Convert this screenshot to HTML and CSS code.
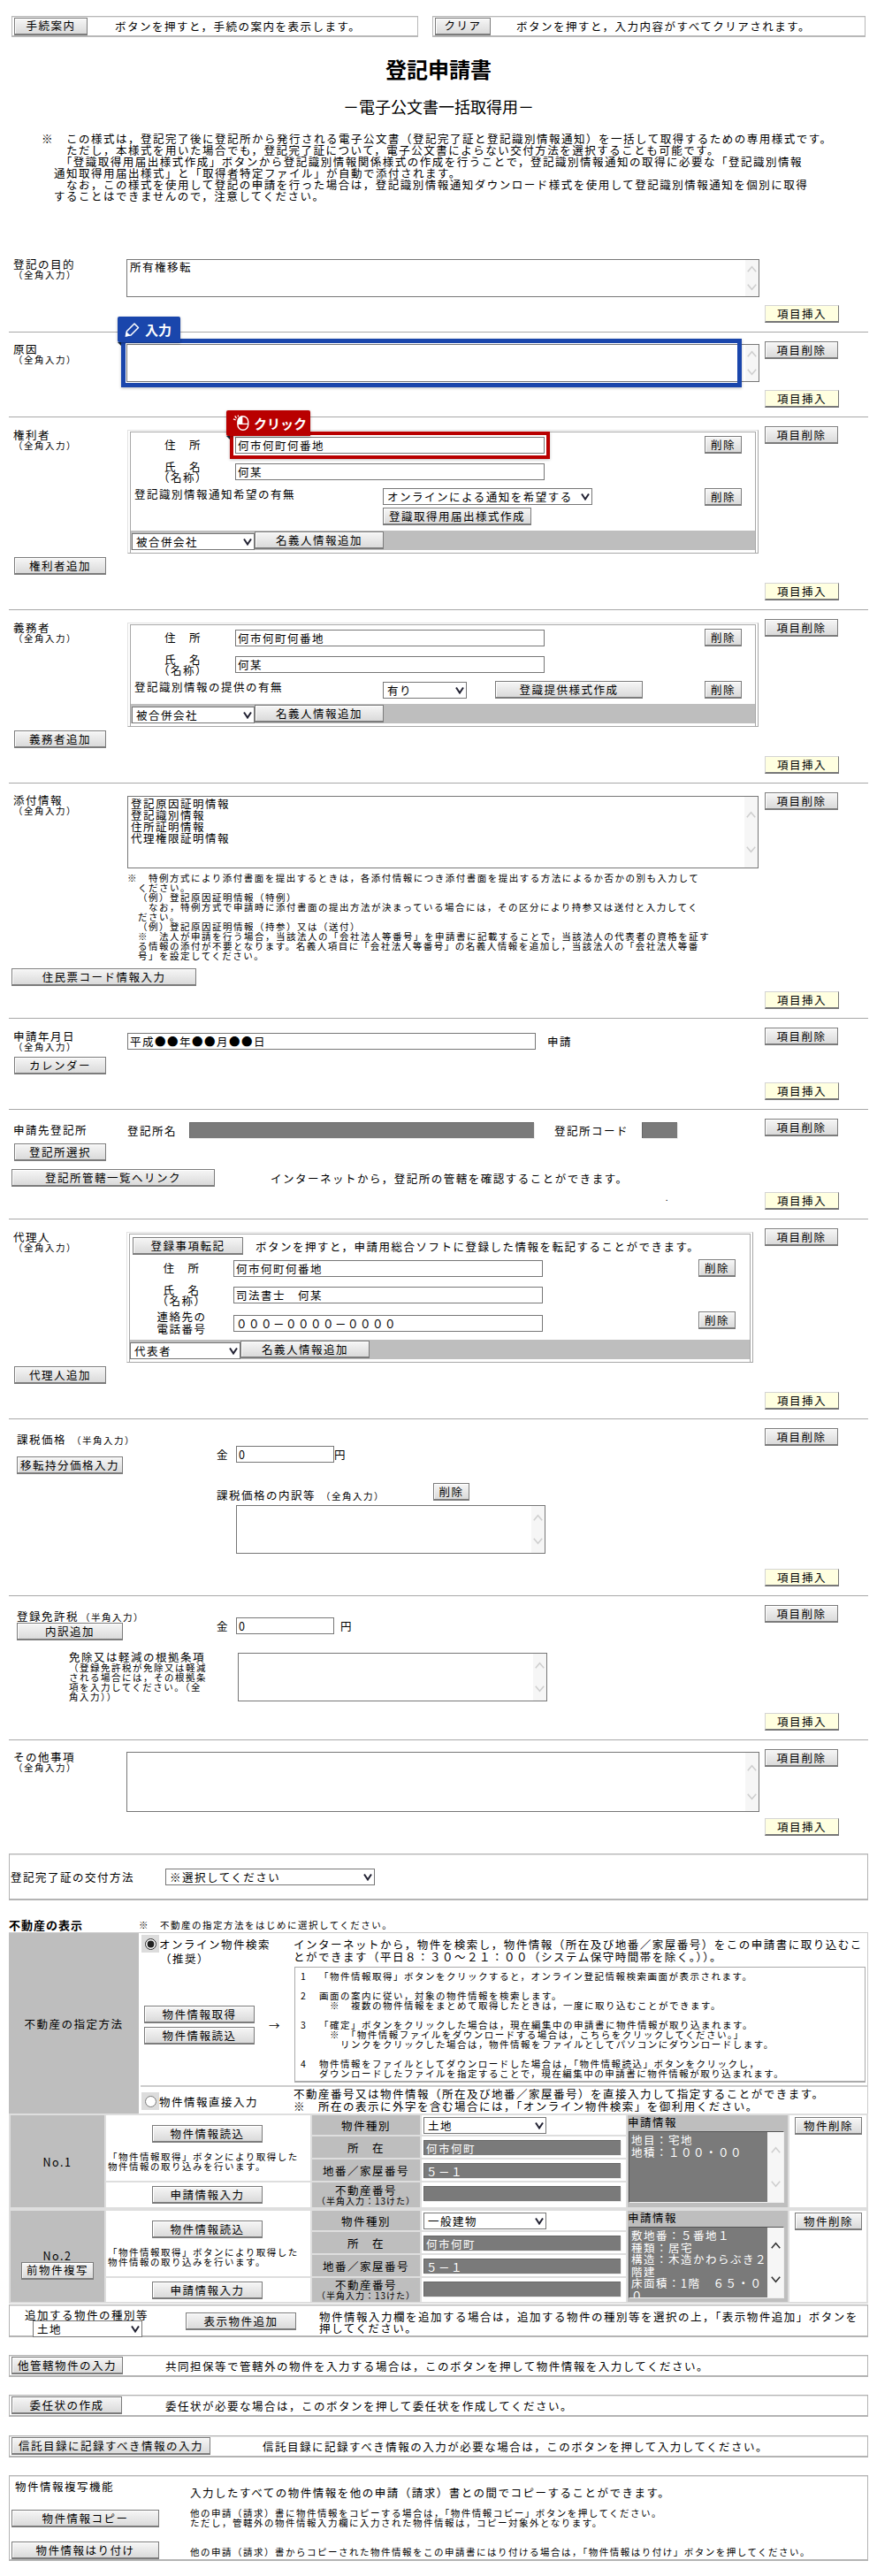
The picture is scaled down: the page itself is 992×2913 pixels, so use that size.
FILE: index.html
```html
<!DOCTYPE html>
<html lang="ja">
<head>
<meta charset="utf-8">
<title>登記申請書</title>
<link rel="stylesheet" href="styles.css">
</head>
<body>
<form class="page">
  <div class="top">
    <div class="box box--guide"><button type="button" class="btn btn--guide">手続案内</button><p class="guide-a">ボタンを押すと，手続の案内を表示します。</p></div>
    <div class="box box--clear"><button type="button" class="btn btn--clear">クリア</button><p class="guide-b">ボタンを押すと，入力内容がすべてクリアされます。</p></div>
  </div>
  <h1 class="title">登記申請書</h1>
  <h2 class="subtitle">－電子公文書一括取得用－</h2>
  <p class="lead">※　この様式は，登記完了後に登記所から発行される電子公文書（登記完了証と登記識別情報通知）を一括して取得するための専用様式です。<br>　ただし，本様式を用いた場合でも，登記完了証について，電子公文書によらない交付方法を選択することも可能です。<br>　「登識取得用届出様式作成」ボタンから登記識別情報関係様式の作成を行うことで，登記識別情報通知の取得に必要な「登記識別情報<br>通知取得用届出様式」と「取得者特定ファイル」が自動で添付されます。<br>　なお，この様式を使用して登記の申請を行った場合は，登記識別情報通知ダウンロード様式を使用して登記識別情報通知を個別に取得<br>することはできませんので，注意してください。</p>

  <section class="sec sec--first">
    <div class="sec-label">登記の目的<small>（全角入力）</small></div>
    <div class="sec-body">
      <div class="ta ta--43"><textarea>所有権移転</textarea><div class="sb"><svg class="chev" viewBox="0 0 14 10"><path d="M1 9 7 2l6 7"/></svg><svg class="chev chev--down" viewBox="0 0 14 10"><path d="M1 1l6 7 6-7"/></svg></div></div>
    </div>
    <div class="sec-foot"><button type="button" class="btn btn--insert">項目挿入</button></div>
  </section>

  <section class="sec">
    <div class="sec-label">原因<small>（全角入力）</small></div>
    <div class="sec-body sec-body--anchor">
      <div class="ta ta--43"><textarea></textarea><div class="sb"><svg class="chev" viewBox="0 0 14 10"><path d="M1 9 7 2l6 7"/></svg><svg class="chev chev--down" viewBox="0 0 14 10"><path d="M1 1l6 7 6-7"/></svg></div></div>
      <div class="frame frame--blue"></div>
      <div class="tag tag--blue"><svg class="tag-icon" viewBox="0 0 18 18"><path d="M2.5 15.5l1-5L12 2l4.5 4.5L8 15z" fill="none" stroke="#fff" stroke-width="1.5" stroke-linejoin="round"/><path d="M1.5 17l1.5-6 4.5 4.5z" fill="#fff"/></svg><span>入力</span></div>
    </div>
    <div class="sec-tools"><button type="button" class="btn btn--item">項目削除</button></div>
    <div class="sec-foot"><button type="button" class="btn btn--insert">項目挿入</button></div>
  </section>

  <section class="sec">
    <div class="sec-label sec-label--3">権利者<small>（全角入力）</small></div>
    <div class="sec-body sec-body--fs">
      <div class="fs"><div class="fs-in">
        <div class="prow prow--1">
          <span class="plabel">住　所</span>
          <div class="field-anchor">
            <input class="fld" type="text" value="何市何町何番地">
            <div class="frame frame--red"></div>
            <div class="tag tag--red"><svg class="tag-icon tag-icon--mouse" viewBox="0 0 22 20"><path d="M7.5 9a6.5 6.5 0 0 1 13 0v4a6.5 6.5 0 0 1-13 0z" transform="translate(-1 -1)" fill="none" stroke="#fff" stroke-width="1.6"/><path d="M6.5 12V8a6 6 0 0 1 6-6v10z" transform="translate(0 -1)" fill="#fff"/><path d="M6.5 11h13" stroke="#fff" stroke-width="1.4"/><path d="M1 5l3 1M3 1l2 3M7 0v2" stroke="#fff" stroke-width="1.4"/></svg><span>クリック</span></div>
          </div>
          <button type="button" class="btn btn--del">削除</button>
        </div>
        <div class="prow prow--2">
          <span class="plabel plabel--two">氏　名<br>（名称）</span>
          <input class="fld fld--down" type="text" value="何某">
        </div>
        <div class="prow prow--3">
          <span class="plabel-wide">登記識別情報通知希望の有無</span>
          <div class="stack">
            <select class="sel sel--notify"><option>オンラインによる通知を希望する</option></select>
            <button type="button" class="btn btn--form">登識取得用届出様式作成</button>
          </div>
          <button type="button" class="btn btn--del">削除</button>
        </div>
        <div class="bar">
          <select class="sel sel--bar"><option>被合併会社</option></select>
          <button type="button" class="btn btn--bar">名義人情報追加</button>
        </div>
      </div></div>
    </div>
    <div class="sec-tools"><button type="button" class="btn btn--item">項目削除</button></div>
    <div class="sec-wide sec-wide--add"><button type="button" class="btn btn--add">権利者追加</button></div>
    <div class="sec-foot"><button type="button" class="btn btn--insert">項目挿入</button></div>
  </section>

  <section class="sec">
    <div class="sec-label sec-label--3">義務者<small>（全角入力）</small></div>
    <div class="sec-body sec-body--fs">
      <div class="fs"><div class="fs-in">
        <div class="prow prow--1">
          <span class="plabel">住　所</span>
          <input class="fld fld--down" type="text" value="何市何町何番地">
          <button type="button" class="btn btn--del">削除</button>
        </div>
        <div class="prow prow--2">
          <span class="plabel plabel--two">氏　名<br>（名称）</span>
          <input class="fld fld--down" type="text" value="何某">
        </div>
        <div class="prow prow--3">
          <span class="plabel-wide">登記識別情報の提供の有無</span>
          <select class="sel sel--provide"><option>有り</option></select>
          <button type="button" class="btn btn--provide">登識提供様式作成</button>
          <button type="button" class="btn btn--del">削除</button>
        </div>
        <div class="bar">
          <select class="sel sel--bar"><option>被合併会社</option></select>
          <button type="button" class="btn btn--bar">名義人情報追加</button>
        </div>
      </div></div>
    </div>
    <div class="sec-tools"><button type="button" class="btn btn--item">項目削除</button></div>
    <div class="sec-wide sec-wide--add"><button type="button" class="btn btn--add">義務者追加</button></div>
    <div class="sec-foot"><button type="button" class="btn btn--insert">項目挿入</button></div>
  </section>

  <section class="sec sec--attach">
    <div class="sec-label">添付情報<small>（全角入力）</small></div>
    <div class="sec-body sec-body--attach">
      <div class="ta ta--82"><textarea>登記原因証明情報
登記識別情報
住所証明情報
代理権限証明情報</textarea><div class="sb"><svg class="chev" viewBox="0 0 14 10"><path d="M1 9 7 2l6 7"/></svg><svg class="chev chev--down" viewBox="0 0 14 10"><path d="M1 1l6 7 6-7"/></svg></div></div>
      <p class="note">※　特例方式により添付書面を提出するときは，各添付情報につき添付書面を提出する方法によるか否かの別も入力して<br>ください。<br>（例）登記原因証明情報（特例）<br>　なお，特例方式で申請時に添付書面の提出方法が決まっている場合には，その区分により持参又は送付と入力してく<br>ださい。<br>（例）登記原因証明情報（持参）又は（送付）<br>※　法人が申請を行う場合，当該法人の「会社法人等番号」を申請書に記載することで，当該法人の代表者の資格を証す<br>る情報の添付が不要となります。名義人項目に「会社法人等番号」の名義人情報を追加し，当該法人の「会社法人等番<br>号」を設定してください。</p>
    </div>
    <div class="sec-tools"><button type="button" class="btn btn--item">項目削除</button></div>
    <div class="sec-wide sec-wide--resident"><button type="button" class="btn btn--resident">住民票コード情報入力</button></div>
    <div class="sec-foot"><button type="button" class="btn btn--insert">項目挿入</button></div>
  </section>

  <section class="sec sec--date">
    <div class="sec-label sec-label--3">申請年月日<small>（全角入力）</small></div>
    <div class="sec-body sec-body--date">
      <input class="fld fld--date" type="text" value="平成●●年●●月●●日"><span class="date-suffix">申請</span>
    </div>
    <div class="sec-tools"><button type="button" class="btn btn--item">項目削除</button></div>
    <div class="sec-wide sec-wide--calendar"><button type="button" class="btn btn--add">カレンダー</button></div>
    <div class="sec-foot"><button type="button" class="btn btn--insert">項目挿入</button></div>
  </section>

  <section class="sec sec--office">
    <div class="sec-label sec-label--6">申請先登記所</div>
    <div class="sec-body sec-body--office">
      <span class="office-label">登記所名</span><input class="dark dark--name" type="text" disabled>
      <span class="office-label office-label--code">登記所コード</span><input class="dark dark--code" type="text" disabled>
    </div>
    <div class="sec-tools"><button type="button" class="btn btn--item">項目削除</button></div>
    <div class="sec-wide sec-wide--pick"><button type="button" class="btn btn--add">登記所選択</button></div>
    <div class="sec-wide sec-wide--link"><button type="button" class="btn btn--link">登記所管轄一覧へリンク</button><span class="link-text">インターネットから，登記所の管轄を確認することができます。</span></div>
    <div class="sec-foot"><span class="stray">.</span><button type="button" class="btn btn--insert">項目挿入</button></div>
  </section>

  <section class="sec">
    <div class="sec-label sec-label--3">代理人<small>（全角入力）</small></div>
    <div class="sec-body sec-body--agent">
      <div class="fs fs--agent"><div class="fs-in">
        <div class="convert"><button type="button" class="btn btn--convert">登録事項転記</button><span class="convert-text">ボタンを押すと，申請用総合ソフトに登録した情報を転記することができます。</span></div>
        <div class="prow prow--a1">
          <span class="plabel plabel--agent">住　所</span>
          <input class="fld fld--down" type="text" value="何市何町何番地">
          <button type="button" class="btn btn--del">削除</button>
        </div>
        <div class="prow prow--2">
          <span class="plabel plabel--agent plabel--two">氏　名<br>（名称）</span>
          <input class="fld fld--down" type="text" value="司法書士　何某">
        </div>
        <div class="prow prow--a3">
          <span class="plabel plabel--agent plabel--tel">連絡先の<br>電話番号</span>
          <input class="fld fld--tel" type="text" value="０００－００００－００００">
          <button type="button" class="btn btn--del">削除</button>
        </div>
        <div class="bar bar--agent">
          <select class="sel sel--agent"><option>代表者</option></select>
          <button type="button" class="btn btn--bar">名義人情報追加</button>
        </div>
      </div></div>
    </div>
    <div class="sec-tools"><button type="button" class="btn btn--item">項目削除</button></div>
    <div class="sec-wide sec-wide--add"><button type="button" class="btn btn--add">代理人追加</button></div>
    <div class="sec-foot"><button type="button" class="btn btn--insert">項目挿入</button></div>
  </section>

  <section class="sec sec--tax">
    <div class="tax-left">
      <div class="tax-title">課税価格<small class="inline-small">（半角入力）</small></div>
      <button type="button" class="btn btn--tax btn--tax-1">移転持分価格入力</button>
    </div>
    <div class="tax-mid">
      <div class="yen yen--1"><span>金</span><input class="fld fld--yen" type="text" value="0"><span>円</span></div>
      <div class="breakdown"><span>課税価格の内訳等</span><small class="inline-small">（全角入力）</small><button type="button" class="btn btn--del">削除</button></div>
      <div class="ta ta--55"><textarea></textarea><div class="sb"><svg class="chev" viewBox="0 0 14 10"><path d="M1 9 7 2l6 7"/></svg><svg class="chev chev--down" viewBox="0 0 14 10"><path d="M1 1l6 7 6-7"/></svg></div></div>
    </div>
    <div class="sec-tools"><button type="button" class="btn btn--item">項目削除</button></div>
    <div class="sec-foot sec-foot--17"><button type="button" class="btn btn--insert">項目挿入</button></div>
  </section>

  <section class="sec sec--tax">
    <div class="tax-left">
      <div class="tax-title">登録免許税<small class="inline-small inline-small--tight">（半角入力）</small></div>
      <button type="button" class="btn btn--tax btn--tax-2">内訳追加</button>
    </div>
    <div class="tax-mid">
      <div class="yen yen--2"><span>金</span><input class="fld fld--yen" type="text" value="0"><span class="yen-mark">円</span></div>
    </div>
    <div class="sec-tools"><button type="button" class="btn btn--item">項目削除</button></div>
    <div class="sec-wide exempt">
      <div class="exempt-text">免除又は軽減の根拠条項<small>（登録免許税が免除又は軽減<br>される場合には，その根拠条<br>項を入力してください。（全<br>角入力））</small></div>
      <div class="ta ta--55"><textarea></textarea><div class="sb"><svg class="chev" viewBox="0 0 14 10"><path d="M1 9 7 2l6 7"/></svg><svg class="chev chev--down" viewBox="0 0 14 10"><path d="M1 1l6 7 6-7"/></svg></div></div>
    </div>
    <div class="sec-foot sec-foot--13"><button type="button" class="btn btn--insert">項目挿入</button></div>
  </section>

  <section class="sec sec--last">
    <div class="sec-label">その他事項<small>（全角入力）</small></div>
    <div class="sec-body">
      <div class="ta ta--68"><textarea></textarea><div class="sb"><svg class="chev" viewBox="0 0 14 10"><path d="M1 9 7 2l6 7"/></svg><svg class="chev chev--down" viewBox="0 0 14 10"><path d="M1 1l6 7 6-7"/></svg></div></div>
    </div>
    <div class="sec-tools"><button type="button" class="btn btn--item">項目削除</button></div>
    <div class="sec-foot sec-foot--7"><button type="button" class="btn btn--insert">項目挿入</button></div>
  </section>

  <div class="panel panel--delivery">
    <span class="delivery-label">登記完了証の交付方法</span>
    <select class="sel sel--delivery"><option>※選択してください</option></select>
  </div>

  <div class="estate-head"><strong>不動産の表示</strong><span>※　不動産の指定方法をはじめに選択してください。</span></div>

  <div class="spec">
    <div class="spec-name">不動産の指定方法</div>
    <div class="spec-main">
      <div class="spec-upper">
        <div class="spec-left">
          <label class="opt"><span class="radio-bg"><input type="radio" name="method" checked></span>オンライン物件検索</label>
          <div class="opt-sub">（推奨）</div>
          <div class="fetch">
            <div class="fetch-btns">
              <button type="button" class="btn btn--std">物件情報取得</button>
              <button type="button" class="btn btn--std">物件情報読込</button>
            </div>
            <span class="arrow">→</span>
          </div>
        </div>
        <div class="spec-right">
          <p class="spec-text">インターネットから，物件を検索し，物件情報（所在及び地番／家屋番号）をこの申請書に取り込むことができます（平日８：３０～２１：００（システム保守時間帯を除く。））。</p>
          <div class="steps">
            <div class="step"><span class="step-n">1</span><div>「物件情報取得」ボタンをクリックすると，オンライン登記情報検索画面が表示されます。</div></div>
            <div class="step"><span class="step-n">2</span><div>画面の案内に従い，対象の物件情報を検索します。<br>　※　複数の物件情報をまとめて取得したときは，一度に取り込むことができます。</div></div>
            <div class="step"><span class="step-n">3</span><div>「確定」ボタンをクリックした場合は，現在編集中の申請書に物件情報が取り込まれます。<br>　※　「物件情報ファイルをダウンロードする場合は，こちらをクリックしてください。」<br>　　リンクをクリックした場合は，物件情報をファイルとしてパソコンにダウンロードします。</div></div>
            <div class="step"><span class="step-n">4</span><div>物件情報をファイルとしてダウンロードした場合は，「物件情報読込」ボタンをクリックし，<br>ダウンロードしたファイルを指定することで，現在編集中の申請書に物件情報が取り込まれます。</div></div>
          </div>
        </div>
      </div>
      <div class="spec-lower">
        <label class="opt opt--lower"><span class="radio-bg"><input type="radio" name="method"></span>物件情報直接入力</label>
        <p class="spec-text spec-text--lower">不動産番号又は物件情報（所在及び地番／家屋番号）を直接入力して指定することができます。<br>※　所在の表示に外字を含む場合には，「オンライン物件検索」を御利用ください。</p>
      </div>
    </div>
  </div>

  <table class="prop prop--1">
    <colgroup><col class="c1"><col class="c2"><col class="c3"><col class="c4"><col class="c5"><col class="c6"></colgroup>
    <tr class="r1">
      <td rowspan="4" class="grey prop-no">No.1</td>
      <td rowspan="3" class="prop-read"><button type="button" class="btn btn--std btn--read">物件情報読込</button><p class="prop-note">「物件情報取得」ボタンにより取得した<br>物件情報の取り込みを行います。</p></td>
      <td class="grey">物件種別</td>
      <td class="prop-val"><select class="sel sel--kind"><option>土地</option></select></td>
      <td rowspan="4" class="grey prop-info">
        <div class="info-head">申請情報</div>
        <div class="ta ta--dark"><textarea>地目：宅地
地積：１００・００</textarea><div class="sb"><svg class="chev" viewBox="0 0 14 10"><path d="M1 9 7 2l6 7"/></svg><svg class="chev chev--down" viewBox="0 0 14 10"><path d="M1 1l6 7 6-7"/></svg></div></div>
      </td>
      <td rowspan="4" class="prop-del"><button type="button" class="btn btn--estate-del">物件削除</button></td>
    </tr>
    <tr class="r2">
      <td class="grey">所　在</td>
      <td class="prop-val"><input class="dark dark--prop" type="text" value="何市何町"></td>
    </tr>
    <tr class="r3">
      <td class="grey">地番／家屋番号</td>
      <td class="prop-val"><input class="dark dark--prop" type="text" value="５－１"></td>
    </tr>
    <tr class="r4">
      <td class="prop-apply"><button type="button" class="btn btn--std btn--read">申請情報入力</button></td>
      <td class="grey grey--num">不動産番号<small>（半角入力：13けた）</small></td>
      <td class="prop-val"><input class="dark dark--prop" type="text"></td>
    </tr>
  </table>

  <table class="prop prop--2">
    <colgroup><col class="c1"><col class="c2"><col class="c3"><col class="c4"><col class="c5"><col class="c6"></colgroup>
    <tr class="r1">
      <td rowspan="4" class="grey prop-no prop-no--2"><span>No.2</span><button type="button" class="btn btn--copyprev">前物件複写</button></td>
      <td rowspan="3" class="prop-read"><button type="button" class="btn btn--std btn--read">物件情報読込</button><p class="prop-note">「物件情報取得」ボタンにより取得した<br>物件情報の取り込みを行います。</p></td>
      <td class="grey">物件種別</td>
      <td class="prop-val"><select class="sel sel--kind"><option>一般建物</option></select></td>
      <td rowspan="4" class="grey prop-info">
        <div class="info-head">申請情報</div>
        <div class="ta ta--dark ta--active"><textarea>敷地番：５番地１
種類：居宅
構造：木造かわらぶき２階建
床面積：1階　６５・００
２階　５０・００</textarea><div class="sb"><svg class="chev" viewBox="0 0 14 10"><path d="M1 9 7 2l6 7"/></svg><svg class="chev chev--down" viewBox="0 0 14 10"><path d="M1 1l6 7 6-7"/></svg></div></div>
      </td>
      <td rowspan="4" class="prop-del"><button type="button" class="btn btn--estate-del">物件削除</button></td>
    </tr>
    <tr class="r2">
      <td class="grey">所　在</td>
      <td class="prop-val"><input class="dark dark--prop" type="text" value="何市何町"></td>
    </tr>
    <tr class="r3">
      <td class="grey">地番／家屋番号</td>
      <td class="prop-val"><input class="dark dark--prop" type="text" value="５－１"></td>
    </tr>
    <tr class="r4 r4--short">
      <td class="prop-apply"><button type="button" class="btn btn--std btn--read">申請情報入力</button></td>
      <td class="grey grey--num">不動産番号<small>（半角入力：13けた）</small></td>
      <td class="prop-val"><input class="dark dark--prop" type="text"></td>
    </tr>
  </table>

  <div class="panel panel--addprop">
    <div class="addprop-left"><span>追加する物件の種別等</span><select class="sel sel--addkind"><option>土地</option></select></div>
    <button type="button" class="btn btn--std btn--addprop">表示物件追加</button>
    <p class="addprop-text">物件情報入力欄を追加する場合は，追加する物件の種別等を選択の上，「表示物件追加」ボタンを押してください。</p>
  </div>

  <div class="panel panel--row panel--r1"><button type="button" class="btn btn--w126">他管轄物件の入力</button><span class="row-text row-text--187">共同担保等で管轄外の物件を入力する場合は，このボタンを押して物件情報を入力してください。</span></div>
  <div class="panel panel--row panel--r2"><button type="button" class="btn btn--w125">委任状の作成</button><span class="row-text row-text--187b">委任状が必要な場合は，このボタンを押して委任状を作成してください。</span></div>
  <div class="panel panel--row panel--r3"><button type="button" class="btn btn--w225">信託目録に記録すべき情報の入力</button><span class="row-text row-text--297">信託目録に記録すべき情報の入力が必要な場合は，このボタンを押して入力してください。</span></div>

  <div class="panel panel--copy">
    <div class="copy-title">物件情報複写機能</div>
    <p class="copy-lead">入力したすべての物件情報を他の申請（請求）書との間でコピーすることができます。</p>
    <button type="button" class="btn btn--copy">物件情報コピー</button>
    <p class="copy-note">他の申請（請求）書に物件情報をコピーする場合は，「物件情報コピー」ボタンを押してください。<br>ただし，管轄外の物件情報入力欄に入力された物件情報は，コピー対象外となります。</p>
    <button type="button" class="btn btn--copy">物件情報はり付け</button>
    <p class="copy-note copy-note--paste">他の申請（請求）書からコピーされた物件情報をこの申請書にはり付ける場合は，「物件情報はり付け」ボタンを押してください。</p>
  </div>
</form>
</body>
</html>
```

FILE: styles.css
```css
* { box-sizing: border-box; }
html, body { margin: 0; padding: 0; background: #fff; }
body { font: 12.5px/13px "Noto Sans CJK JP", "Liberation Sans", sans-serif; letter-spacing: 1.5px; color: #000; }
p, h1, h2 { margin: 0; }
small { font-size: 10.5px; line-height: 11px; }
button, input, select, textarea { font: inherit; letter-spacing: inherit; color: #000; margin: 0; }

.page { width: 992px; padding: 18px 10px 16px; }

/* buttons */
.btn {
  display: block; flex: none; height: 20px; padding: 0; line-height: 16px; text-align: center;
  white-space: nowrap; cursor: default; overflow: hidden;
  border: 1px solid #7c7c7c; border-bottom-width: 2px;
  background: linear-gradient(#f6f6f6, #dadada);
  box-shadow: inset 1px 1px 0 #fff;
}
.btn--guide { width: 83px; }
.btn--clear { width: 63px; }
.btn--item { width: 83px; }
.btn--insert { width: 84px; background: #ffffe0; border-color: #d4d4d4 #777 #777 #d4d4d4; box-shadow: none; }
.btn--del { width: 42px; margin-left: auto; margin-right: 15px; }
.breakdown .btn--del { margin: 0 0 0 55px; width: 41px; }
.btn--add { width: 104px; }
.btn--form { width: 168px; margin-top: 3px; }
.btn--provide { width: 167px; margin-left: 32px; }
.btn--bar { width: 146px; }
.btn--resident { width: 209px; }
.btn--link { width: 230px; }
.btn--convert { width: 125px; }
.btn--tax { width: 120px; }
.btn--tax-1 { margin-top: 13px; }
.btn--tax-2 { margin-top: 1px; }
.btn--std { width: 125px; }
.btn--estate-del { width: 76px; margin: 2px 0 0 6px; }
.btn--copyprev { width: 82px; margin: 0 auto; }
.btn--w126 { width: 126px; }
.btn--w125 { width: 125px; }
.btn--w225 { width: 225px; }
.btn--copy { width: 167px; margin-left: 2px; }

/* header */
.top { display: flex; gap: 16px; margin-left: 3px; }
.box { display: flex; align-items: center; height: 24px; padding: 0 2px; border: 1px solid #b8b8b8; border-bottom-width: 2px; box-shadow: inset 0 1px 0 #e8e8e8; }
.box--guide { width: 460px; }
.box--clear { width: 490px; }
.guide-a { margin-left: 31px; }
.guide-b { margin-left: 29px; }
.title { margin-top: 24px; font-size: 24px; line-height: 24px; letter-spacing: 0; font-weight: 700; text-align: center; }
.subtitle { margin-top: 21px; font-size: 18px; line-height: 18px; letter-spacing: 0; font-weight: 400; text-align: center; }
.lead { margin: 21px 0 52px 51px; padding-left: 0; text-indent: -14px; white-space: nowrap; }

/* sections */
.sec { display: grid; grid-template-columns: 133px 716px 1fr; padding: 10px 0; border-bottom: 1px solid #a8a8a8; align-items: start; }
.sec-label { margin: 2px 0 0 5px; white-space: nowrap; }
.sec-label--3 { margin-top: 3px; }
.sec-label--6 { margin-top: 6px; }
.sec-label small { display: block; }
.sec-body { margin-top: 3px; }
.sec-body--anchor { position: relative; }
.sec-body--fs { margin: 4px 0 0 1px; }
.sec-body--agent { margin-top: 4px; }
.sec-body--attach { margin: 4px 0 0 1px; }
.sec-body--date { margin: 6px 0 0 1px; display: flex; align-items: center; }
.sec-body--office { margin: 4px 0 0 1px; display: flex; align-items: center; }
.sec-tools { padding-left: 6px; }
.sec-wide, .sec-foot { grid-column: 1 / -1; }
.sec-wide--add { margin: 4px 0 0 6px; }
.sec-wide--resident { margin: 9px 0 0 3px; }
.sec-wide--calendar { margin: 6px 0 0 6px; }
.sec-wide--pick { margin: 6px 0 0 6px; }
.sec-wide--link { margin: 9px 0 0 3px; display: flex; align-items: center; }
.sec-foot { display: flex; justify-content: flex-end; margin: 9px 33px 0 0; }
.sec--attach .sec-foot { margin-top: 6px; }
.sec--office .sec-foot { margin-top: 6px; }
.sec-foot--17 { margin-top: 17px; }
.sec-foot--13 { margin-top: 13px; }
.sec-foot--7 { margin-top: 7px; }
.link-text { margin-left: 63px; }
.stray { margin: 1px 108px 0 0; line-height: 10px; font-size: 10px; }
.date-suffix { margin-left: 13px; }
.office-label { flex: none; width: 70px; }
.office-label--code { width: 99px; margin-left: 23px; }

/* textareas with drawn scroll column */
.ta { display: flex; border: 1px solid #777; background: #fff; overflow: hidden; }
.ta textarea { flex: 1; min-width: 0; border: 0; padding: 1px 2px 0 3px; resize: none; overflow: hidden; line-height: 13px; background: transparent; outline: 0; }
.sb { flex: none; width: 15px; display: flex; flex-direction: column; justify-content: space-around; align-items: center; background: #f6f6f6; }
.chev { width: 11px; height: 8px; fill: none; stroke: #cfcfcf; stroke-width: 2; }
.ta--43 { height: 43px; }
.ta--82 { height: 82px; width: 714px; }
.ta--55 { height: 55px; width: 350px; }
.ta--68 { height: 68px; }
.ta--dark { height: 81px; width: 176px; margin-top: 2px; background: #7a7a7a; border-color: #555; border-right-color: #eee; border-bottom-color: #eee; }
.ta--dark textarea { color: #fff; padding: 2px 0 0 2px; line-height: 13.5px; }
.ta--dark .sb { width: 18px; }
.ta--active .chev { stroke: #333; }

/* overlays */
.frame { position: absolute; pointer-events: none; box-shadow: 0 1px 3px rgba(0,0,0,.25); }
.frame--blue { left: -6px; top: -6px; width: 702px; height: 55px; border: 5px solid #1a46ac; }
.frame--red { left: -6px; top: -6px; width: 362px; height: 31px; border: 4px solid #b90000; }
.tag { position: absolute; display: flex; align-items: center; color: #fff; font-size: 15px; line-height: 16px; letter-spacing: 0; font-weight: 700; border-radius: 2px 2px 0 2px; box-shadow: 0 1px 3px rgba(0,0,0,.3); }
.tag::after { content: ""; position: absolute; left: 0; top: 100%; border-top: 4px solid #123; border-left: 4px solid transparent; }
.tag--blue { left: -10px; top: -31px; width: 71px; height: 29px; padding-left: 7px; gap: 6px; background: #1a46ac; }
.tag--red { left: -10px; top: -30px; width: 95px; height: 29px; padding-left: 7px; gap: 4px; background: #b90000; }
.tag-icon { width: 18px; height: 18px; flex: none; }
.tag-icon--mouse { width: 20px; height: 19px; }
.field-anchor { position: relative; flex: none; }

/* party field sets */
.fs { width: 714px; padding: 1px 2px 0; border: 1px solid #e2e2e2; border-bottom-color: #a8a8a8; border-right-color: #a8a8a8; }
.fs--agent { width: 709px; }
.fs-in { border: 1px solid #a8a8a8; border-bottom: 0; padding: 0 0 3px; }
.prow { display: flex; align-items: flex-start; }
.prow--1 { margin-top: 4px; height: 20px; }
.prow--1 .field-anchor { margin-top: 1px; }
.prow--2 { margin-top: 10px; height: 21px; }
.prow--3 { margin-top: 8px; }
.prow--a1 { margin-top: 5px; height: 20px; }
.prow--a3 { margin-top: 8px; height: 24px; }
.plabel { flex: none; width: 118px; text-align: center; line-height: 20px; }
.plabel--two { line-height: 12px; margin-top: -1px; }
.plabel--agent { width: 117px; }
.plabel--agent ~ .btn--del { margin-right: 16px; }
.plabel--tel { line-height: 14px; margin-top: -1px; }
.plabel-wide { flex: none; width: 285px; padding: 0 0 0 4px; line-height: 13px; }
.stack { flex: none; }
.fld { display: block; flex: none; width: 350px; height: 19px; padding: 0 2px; border: 1px solid #777; background: #fff; outline: 0; }
.fld--down { margin-top: 1px; }
.fld--tel { margin-top: 4px; }
.fld--date { width: 462px; }
.fld--yen { width: 111px; height: 19px; }
.sel {
  display: block; height: 19px; padding: 0 14px 0 4px; border: 1px solid #777; border-radius: 0; appearance: none; flex: none;
  background: #fff url("data:image/svg+xml,%3Csvg xmlns='http://www.w3.org/2000/svg' width='10' height='9'%3E%3Cpath d='M1 1.5 5 7.5 9 1.5' fill='none' stroke='%23223' stroke-width='2'/%3E%3C/svg%3E") no-repeat right 2px center;
}
.sel--notify { width: 237px; }
.sel--provide { width: 95px; margin-top: 1px; }
.sel--bar { width: 139px; margin: 2px 0 0 1px; }
.sel--agent { width: 125px; margin: 2px 0 0 0; }
.sel--delivery { width: 237px; margin-left: 35px; }
.sel--kind { width: 139px; margin: 2px 0 0 2px; }
.sel--addkind { width: 124px; margin: 0 0 0 9px; }
.bar { display: flex; align-items: flex-start; height: 22px; margin-top: 6px; padding-top: 1px; background: #bebebe; width: 706px; }
.bar--agent { margin-top: 8px; width: 701px; }
.convert { display: flex; align-items: center; margin: 3px 0 0 3px; }
.convert-text { margin-left: 14px; white-space: nowrap; }

.note { margin-top: 5px; padding-left: 12px; text-indent: -12px; font-size: 10.5px; line-height: 11px; white-space: nowrap; }

/* tax sections */
.sec--tax { grid-template-columns: 235px 614px 1fr; }
.tax-left { padding-left: 9px; }
.tax-title { margin-top: 6px; white-space: nowrap; }
.inline-small { margin-left: 6px; }
.inline-small--tight { margin-left: 2px; }
.yen { display: flex; align-items: center; }
.yen .fld { margin-left: 8px; }
.yen--1 { margin-top: 20px; }
.yen--2 { margin-top: 14px; }
.yen-mark { margin-left: 7px; }
.breakdown { display: flex; align-items: flex-end; margin-top: 23px; white-space: nowrap; }
.tax-mid > .ta { margin: 5px 0 0 22px; }
.exempt { display: flex; margin: 12px 0 0 68px; }
.exempt-text { flex: none; width: 155px; white-space: nowrap; }
.exempt-text small { display: block; }
.exempt .ta { margin: 2px 0 0 36px; }
.sec--last { border-bottom: 0; padding-bottom: 0; }

/* panels */
.panel { border: 1px solid #b4b4b4; border-bottom-width: 2px; box-shadow: inset 0 1px 0 #e4e4e4; }
.panel--delivery { display: flex; align-items: center; height: 53px; margin-top: 20px; padding-left: 1px; }
.estate-head { display: flex; align-items: center; height: 14px; margin-top: 20px; }
.estate-head strong { width: 147px; flex: none; font-size: 13px; letter-spacing: 1px; }
.estate-head span { font-size: 10.5px; }

.spec { display: grid; grid-template-columns: 147px 1fr; height: 205px; margin-top: 2px; border-top: 1px solid #ccc; border-right: 1px solid #ccc; }
.spec-name { display: flex; align-items: center; justify-content: center; background: #bebebe; }
.spec-main { padding-left: 2px; }
.spec-upper { display: flex; height: 174px; border-bottom: 2px solid #ccc; }
.spec-left { flex: none; width: 173px; padding-top: 2px; }
.spec-right { flex: 1; padding-top: 6px; }
.spec-text { line-height: 14px; }
.opt { display: flex; align-items: center; height: 20px; margin-left: 1px; white-space: nowrap; }
.radio-bg { display: flex; align-items: center; justify-content: center; flex: none; width: 20px; height: 20px; background: #dcdcdc; }
.radio-bg input { margin: 0; accent-color: #222; width: 13px; height: 13px; }
.opt-sub { margin-left: 22px; line-height: 14px; }
.fetch { display: flex; align-items: center; margin: 46px 0 0 4px; }
.fetch-btns { display: flex; flex-direction: column; gap: 4px; }
.arrow { margin-left: 16px; }
.steps { width: 646px; height: 131px; margin: 4px 0 0 1px; padding: 4px 0 0 6px; border: 1px solid #aaa; border-bottom-width: 2px; font-size: 10.5px; line-height: 11px; white-space: nowrap; }
.step { display: flex; margin-bottom: 11px; }
.step-n { flex: none; width: 21px; }
.spec-lower { display: flex; height: 30px; }
.opt--lower { flex: none; width: 172px; margin-top: 6px; }
.spec-text--lower { padding-top: 1px; white-space: nowrap; }

/* property tables */
.prop { width: 972px; table-layout: fixed; border-collapse: separate; border-spacing: 2px; background: #dedede; }
.prop td { padding: 0; text-align: center; vertical-align: middle; background: #fff; }
.prop td.grey { background: #bebebe; }
.c1 { width: 106px; } .c2 { width: 231px; } .c3 { width: 122px; } .c4 { width: 231px; } .c5 { width: 181px; } .c6 { width: 87px; }
.r1 td { height: 22px; } .r2 td { height: 24px; } .r3 td { height: 24px; } .r4 td { height: 28px; } .r4--short td { height: 27px; }
.prop td.prop-info, .prop td.prop-del, .prop td.prop-read, .prop td.prop-val, .prop td.prop-apply { vertical-align: top; text-align: left; }
.prop-no--2 span { display: block; margin: 18px 0 1px; }
.btn--read { margin: 11px 0 0 52px; }
.prop-apply .btn--read { margin: 4px 0 0 52px; }
.prop-note { margin: 10px 0 0 2px; font-size: 10.5px; line-height: 11px; white-space: nowrap; }
.grey--num { line-height: 12px; }
.grey--num small { display: block; font-size: 10px; letter-spacing: 1px; line-height: 11px; white-space: nowrap; }
.dark { display: block; flex: none; height: 18px; padding: 0 2px; border: 0; border-top: 1px solid #666; border-left: 1px solid #666; background: #7a7a7a; color: #fff; outline: 0; box-shadow: 1px 1px 0 #eee; }
.dark:disabled { color: #fff; }
.dark--name { width: 390px; }
.dark--code { width: 40px; }
.dark--prop { width: 223px; height: 17px; margin: 4px 0 0 2px; }
.info-head { line-height: 16px; }
.prop-info .ta { margin-left: 1px; }

.panel--addprop { display: flex; align-items: flex-start; height: 37px; margin-top: 1px; }
.addprop-left { flex: none; width: 199px; padding: 4px 0 0 17px; }
.addprop-left span { display: block; }
.btn--addprop { margin-top: 8px; }
.addprop-text { margin: 6px 0 0 26px; width: 620px; }

.panel--row { display: flex; align-items: center; padding-left: 2px; height: 25px; }
.panel--r1 { margin-top: 20px; }
.panel--r2 { margin-top: 20px; }
.panel--r3 { margin-top: 21px; }
.row-text { white-space: nowrap; }
.row-text--187 { margin-left: 48px; }
.row-text--187b { margin-left: 49px; }
.row-text--297 { margin-left: 59px; }

.panel--copy { display: grid; grid-template-columns: 204px 1fr; grid-template-rows: 38px 36px 20px; height: 97px; margin-top: 20px; }
.copy-title { margin: 5px 0 0 6px; }
.copy-lead { margin-top: 12px; white-space: nowrap; }
.copy-note { margin-top: -2px; font-size: 10.5px; line-height: 11px; white-space: nowrap; }
.copy-note--paste { margin-top: 6px; }
```
